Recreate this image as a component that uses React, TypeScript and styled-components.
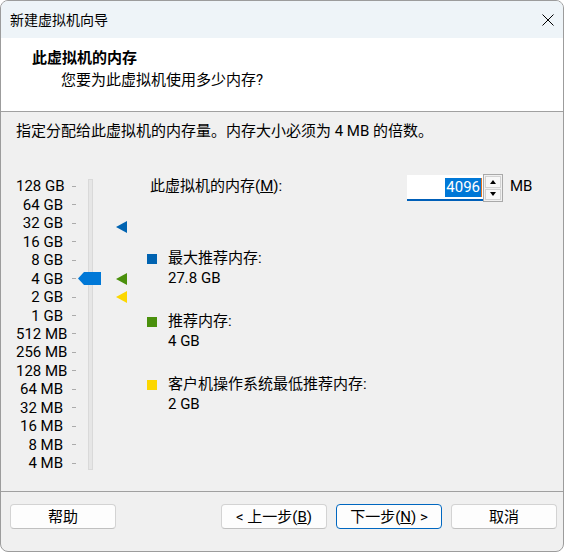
import styled, { createGlobalStyle } from "styled-components";

const GlobalStyle = createGlobalStyle`
  html, body {
    margin: 0;
    background: #ffffff;
  }
  body {
    font-family: Roboto, "Noto Sans CJK SC", sans-serif;
    font-size: 15px;
    color: #000000;
  }
`;

const Window = styled.div`
  width: 564px;
  height: 552px;
  box-sizing: border-box;
  border: 1px solid #9c9c9c;
  border-radius: 8px;
  overflow: hidden;
  background: #f0f0f0;
  display: flex;
  flex-direction: column;
`;

const TitleBar = styled.header`
  height: 37px;
  flex: none;
  background: #eef4f8;
  display: flex;
  align-items: center;
  justify-content: space-between;
  padding: 0 9px;
`;

const TitleText = styled.span`
  font-size: 14px;
  line-height: 20px;
`;

const CloseButton = styled.div`
  width: 12px;
  height: 12px;
  display: flex;
`;

const WizardHeader = styled.section`
  height: 73px;
  flex: none;
  background: #ffffff;
  border-bottom: 1px solid #a0a0a0;
`;

const StepTitle = styled.div`
  margin-top: 10px;
  padding-left: 31px;
  line-height: 20px;
  font-weight: 700;
`;

const StepSubtitle = styled.div`
  margin-top: 2px;
  padding-left: 60px;
  line-height: 20px;
`;

const Body = styled.main`
  flex: 1;
  padding: 9px 15px 0;
`;

const Intro = styled.p`
  margin: 0;
  line-height: 20px;
`;

const Content = styled.div`
  display: flex;
  align-items: flex-start;
  margin-top: 36px;
`;

const Slider = styled.div`
  position: relative;
  display: flex;
  height: 295.5px;
`;

const Scale = styled.div`
  display: flex;
  flex-direction: column;
`;

const ScaleRow = styled.div`
  flex: 1;
  display: flex;
  align-items: center;
`;

const ScaleLabel = styled.span`
  width: 47px;
  text-align: right;
  line-height: 16px;
  white-space: nowrap;
`;

const Tick = styled.span`
  margin-left: 9px;
  width: 4px;
  height: 1px;
  background: #ababab;
`;

const Track = styled.div`
  margin-left: 12px;
  align-self: center;
  width: 5px;
  height: 291px;
  box-sizing: border-box;
  border: 1px solid #d9d9d9;
  background: #e6e6e6;
`;

const Thumb = styled.div`
  position: absolute;
  left: 62px;
  width: 23px;
  height: 13px;
  margin-top: -6.5px;
  background: #0078d7;
  clip-path: polygon(0 50%, 6px 0, 100% 0, 100% 100%, 6px 100%);
`;

const MarkerLane = styled.div`
  position: relative;
  margin-left: 23px;
  width: 11px;
`;

const Marker = styled.div<{ $color: string }>`
  position: absolute;
  left: 0;
  margin-top: -6px;
  width: 0;
  height: 0;
  border-top: 6px solid transparent;
  border-bottom: 6px solid transparent;
  border-right: 11px solid ${(p) => p.$color};
`;

const Panel = styled.div`
  margin-left: 20px;
  display: flex;
  flex-direction: column;
`;

const MemoryRow = styled.div`
  margin-top: -3px;
  height: 28px;
  display: flex;
  align-items: center;
`;

const MemoryLabel = styled.label`
  width: 257px;
  padding-left: 3px;
  margin-bottom: 4px;
  line-height: 20px;
`;

const NumberBox = styled.div`
  width: 76px;
  height: 26px;
  box-sizing: border-box;
  background: #ffffff;
  border-bottom: 2px solid #005fb8;
  display: flex;
  justify-content: flex-end;
  align-items: center;
  padding-right: 1px;
`;

const Selected = styled.span`
  background: #0078d7;
  color: #ffffff;
  line-height: 19px;
  padding: 0 1px;
`;

const Caret = styled.span`
  width: 1px;
  height: 19px;
  background: #e8741c;
`;

const Spinner = styled.div`
  width: 20px;
  height: 28px;
  box-sizing: border-box;
  border: 1px solid #a9a9a9;
  padding: 1px;
  display: flex;
  flex-direction: column;
  gap: 1px;
`;

const SpinButton = styled.div<{ $down?: boolean }>`
  flex: 1;
  border: 1px solid #d2d2d2;
  background: #f8f8f8;
  display: flex;
  align-items: center;
  justify-content: center;

  &::after {
    content: "";
    width: 0;
    height: 0;
    border-left: 3.5px solid transparent;
    border-right: 3.5px solid transparent;
    ${(p) =>
      p.$down ? "border-top: 4px solid #000;" : "border-bottom: 4px solid #000;"}
  }
`;

const Unit = styled.span`
  margin-left: 7px;
  margin-bottom: 4px;
  line-height: 20px;
`;

const Legend = styled.div`
  margin-top: 46px;
  display: flex;
  flex-direction: column;
  gap: 23px;
`;

const LegendItem = styled.div`
  display: flex;
  align-items: flex-start;
`;

const Swatch = styled.span<{ $color: string }>`
  margin-top: 6px;
  width: 10px;
  height: 10px;
  flex: none;
  background: ${(p) => p.$color};
`;

const LegendText = styled.div`
  margin-left: 11px;
  line-height: 20px;
`;

const Footer = styled.footer`
  height: 47px;
  flex: none;
  border-top: 1px solid #a0a0a0;
  padding: 12px 6px 0 9px;
  display: flex;
  align-items: flex-start;
  gap: 9px;
`;

const Button = styled.button<{ $primary?: boolean }>`
  width: 106px;
  height: 25px;
  box-sizing: border-box;
  padding: 0;
  border: 1px solid ${(p) => (p.$primary ? "#0067c0" : "#d3d3d3")};
  border-bottom-color: ${(p) => (p.$primary ? "#0067c0" : "#c0c0c0")};
  border-radius: 4px;
  background: #fdfdfd;
  font: inherit;
  line-height: 20px;
  color: #000000;

  &:first-child {
    margin-right: auto;
  }
`;

const LABELS = [
  "128 GB", "64 GB", "32 GB", "16 GB", "8 GB", "4 GB", "2 GB", "1 GB",
  "512 MB", "256 MB", "128 MB", "64 MB", "32 MB", "16 MB", "8 MB", "4 MB",
];

const ROW = 295.5 / 16;
// position of a value (MB) on the log scale
const yFor = (mb: number) => ROW / 2 + ROW * Math.log2(131072 / mb);

const App = () => {
  return (
    <>
      <GlobalStyle />
      <Window>
        <TitleBar>
          <TitleText>新建虚拟机向导</TitleText>
          <CloseButton>
            <svg width="12" height="12" viewBox="0 0 12 12">
              <path d="M0.5 0.5 L11.5 11.5 M11.5 0.5 L0.5 11.5" stroke="#000" strokeWidth="1" />
            </svg>
          </CloseButton>
        </TitleBar>
        <WizardHeader>
          <StepTitle>此虚拟机的内存</StepTitle>
          <StepSubtitle>您要为此虚拟机使用多少内存?</StepSubtitle>
        </WizardHeader>
        <Body>
          <Intro>指定分配给此虚拟机的内存量。内存大小必须为 4 MB 的倍数。</Intro>
          <Content>
            <Slider>
              <Scale>
                {LABELS.map((l) => (
                  <ScaleRow key={l}>
                    <ScaleLabel>{l}</ScaleLabel>
                    <Tick />
                  </ScaleRow>
                ))}
              </Scale>
              <Track />
              <Thumb style={{ top: yFor(4096) }} />
              <MarkerLane>
                <Marker $color="#0063b1" style={{ top: yFor(27.8 * 1024) }} />
                <Marker $color="#4a900c" style={{ top: yFor(4096) }} />
                <Marker $color="#fcd700" style={{ top: yFor(2048) }} />
              </MarkerLane>
            </Slider>
            <Panel>
              <MemoryRow>
                <MemoryLabel>
                  此虚拟机的内存(<u>M</u>):
                </MemoryLabel>
                <NumberBox>
                  <Selected>4096</Selected>
                  <Caret />
                </NumberBox>
                <Spinner>
                  <SpinButton />
                  <SpinButton $down />
                </Spinner>
                <Unit>MB</Unit>
              </MemoryRow>
              <Legend>
                <LegendItem>
                  <Swatch $color="#0063b1" />
                  <LegendText>
                    <div>最大推荐内存:</div>
                    <div>27.8 GB</div>
                  </LegendText>
                </LegendItem>
                <LegendItem>
                  <Swatch $color="#4a900c" />
                  <LegendText>
                    <div>推荐内存:</div>
                    <div>4 GB</div>
                  </LegendText>
                </LegendItem>
                <LegendItem>
                  <Swatch $color="#fcd700" />
                  <LegendText>
                    <div>客户机操作系统最低推荐内存:</div>
                    <div>2 GB</div>
                  </LegendText>
                </LegendItem>
              </Legend>
            </Panel>
          </Content>
        </Body>
        <Footer>
          <Button>帮助</Button>
          <Button>&lt; 上一步(<u>B</u>)</Button>
          <Button $primary>下一步(<u>N</u>) &gt;</Button>
          <Button>取消</Button>
        </Footer>
      </Window>
    </>
  );
};

export default App;
